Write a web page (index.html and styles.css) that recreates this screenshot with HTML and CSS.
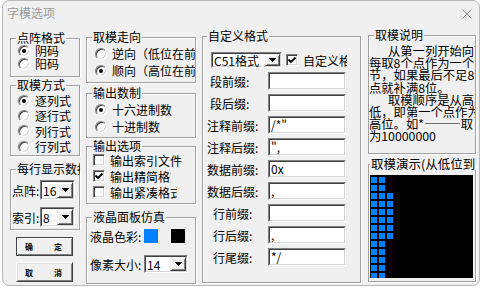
FILE: index.html
```html
<!DOCTYPE html>
<html lang="zh-CN">
<head>
<meta charset="utf-8">
<title>字模选项</title>
<link rel="stylesheet" href="styles.css">
</head>
<body>
<div class="window">
  <div class="titlebar">
    <span class="title">字模选项</span>
    <svg class="close" width="10" height="10" viewBox="0 0 10 10"><path d="M0.5 0.5L9.5 9.5M9.5 0.5L0.5 9.5" stroke="#8c8c8c" stroke-width="1" fill="none"/></svg>
  </div>
  <div class="client">
    <div class="col col-a">
      <div class="group g1">
        <div class="gt">点阵格式</div>
        <div class="opt"><span class="radio on"></span>阴码</div>
        <div class="opt"><span class="radio"></span>阳码</div>
      </div>
      <div class="group g2">
        <div class="gt">取模方式</div>
        <div class="opt"><span class="radio on"></span>逐列式</div>
        <div class="opt"><span class="radio"></span>逐行式</div>
        <div class="opt"><span class="radio"></span>列行式</div>
        <div class="opt"><span class="radio"></span>行列式</div>
      </div>
      <div class="group g3">
        <div class="gt">每行显示数据</div>
        <div class="crow">
          <span class="clabel">点阵:</span>
          <div class="combo cb-dot"><div class="combo-in"><span class="cv">16</span><span class="drop"><svg width="7" height="4" viewBox="0 0 7 4"><path d="M0 0h7v1H0zM1 1h5v1H1zM2 2h3v1H2zM3 3h1v1H3z" fill="#000"/></svg></span></div></div>
        </div>
        <div class="crow">
          <span class="clabel">索引:</span>
          <div class="combo cb-dot"><div class="combo-in"><span class="cv">8</span><span class="drop"><svg width="7" height="4" viewBox="0 0 7 4"><path d="M0 0h7v1H0zM1 1h5v1H1zM2 2h3v1H2zM3 3h1v1H3z" fill="#000"/></svg></span></div></div>
        </div>
      </div>
      <div class="btn btn-default"><span>确</span><span>定</span></div>
      <div class="btn btn-cancel"><span>取</span><span>消</span></div>
    </div>

    <div class="col col-b">
      <div class="group g4">
        <div class="gt">取模走向</div>
        <div class="opt"><span class="radio"></span>逆向（低位在前）</div>
        <div class="opt"><span class="radio on"></span>顺向（高位在前）</div>
      </div>
      <div class="group g5">
        <div class="gt">输出数制</div>
        <div class="opt"><span class="radio on"></span>十六进制数</div>
        <div class="opt"><span class="radio"></span>十进制数</div>
      </div>
      <div class="group g6">
        <div class="gt">输出选项</div>
        <div class="opt"><span class="check"></span>输出索引文件</div>
        <div class="opt w2"><span class="check"><svg width="10" height="10" viewBox="0 0 10 10"><path d="M1.5 4.5L4 7L8.5 2.5" stroke="#000" stroke-width="1.8" fill="none"/></svg></span>输出精简格式</div>
        <div class="opt w3"><span class="check"></span>输出紧凑格式</div>
      </div>
      <div class="group g7">
        <div class="gt">液晶面板仿真</div>
        <div class="lrow">
          <span class="llabel">液晶色彩:</span>
          <span class="swatch blue"></span>
          <span class="swatch black"></span>
        </div>
        <div class="lrow lrow2">
          <span class="llabel">像素大小:</span>
          <div class="combo cb-px"><div class="combo-in"><span class="cv">14</span><span class="drop"><svg width="7" height="4" viewBox="0 0 7 4"><path d="M0 0h7v1H0zM1 1h5v1H1zM2 2h3v1H2zM3 3h1v1H3z" fill="#000"/></svg></span></div></div>
        </div>
      </div>
    </div>

    <div class="col col-c">
      <div class="group g8">
        <div class="gt">自定义格式</div>
        <div class="fmt-row">
          <div class="combo cb-fmt"><div class="combo-in"><span class="cv">C51格式</span><span class="drop"><svg width="7" height="4" viewBox="0 0 7 4"><path d="M0 0h7v1H0zM1 1h5v1H1zM2 2h3v1H2zM3 3h1v1H3z" fill="#000"/></svg></span></div></div>
          <div class="chk-wrap"><span class="check"><svg width="10" height="10" viewBox="0 0 10 10"><path d="M1.5 4.5L4 7L8.5 2.5" stroke="#000" stroke-width="1.8" fill="none"/></svg></span><span class="chk-text">自定义格式</span></div>
        </div>
        <div class="frow"><span class="flabel p7">段前缀:</span><div class="field"><div class="field-in"></div></div></div>
        <div class="frow"><span class="flabel p7">段后缀:</span><div class="field"><div class="field-in"></div></div></div>
        <div class="frow"><span class="flabel p4">注释前缀:</span><div class="field"><div class="field-in">/*"</div></div></div>
        <div class="frow"><span class="flabel p4">注释后缀:</span><div class="field"><div class="field-in">",</div></div></div>
        <div class="frow"><span class="flabel p4">数据前缀:</span><div class="field"><div class="field-in">0x</div></div></div>
        <div class="frow"><span class="flabel p4">数据后缀:</span><div class="field"><div class="field-in">,</div></div></div>
        <div class="frow"><span class="flabel p10">行前缀:</span><div class="field"><div class="field-in"></div></div></div>
        <div class="frow"><span class="flabel p10">行后缀:</span><div class="field"><div class="field-in">,</div></div></div>
        <div class="frow"><span class="flabel p10">行尾缀:</span><div class="field"><div class="field-in">*/</div></div></div>
      </div>
    </div>

    <div class="col col-d">
      <div class="group g9">
        <div class="gt">取模说明</div>
        <div class="desc">
          <div class="ind">从第一列开始向下</div>
          <div>每取8个点作为一个字</div>
          <div>节，如果最后不足8个</div>
          <div>点就补满8位。</div>
          <div class="ind">取模顺序是从高到</div>
          <div>低，即第一个点作为最</div>
          <div>高位。如*———取</div>
          <div>为10000000</div>
        </div>
      </div>
      <div class="group g10">
        <div class="gt">取模演示(从低位到高位)</div>
        <svg class="lcd" width="103" height="103" viewBox="0 0 103 103">
          <defs>
            <pattern id="px" x="1" y="2" width="8" height="8" patternUnits="userSpaceOnUse">
              <rect x="0" y="0" width="6" height="6" fill="#0080ff"/>
            </pattern>
          </defs>
          <rect x="0" y="0" width="103" height="103" fill="#000"/>
          <rect x="1" y="2" width="16" height="104" fill="url(#px)"/>
          <rect x="17" y="18" width="8" height="48" fill="url(#px)"/>
        </svg>
      </div>
    </div>
  </div>
</div>
</body>
</html>
```
FILE: styles.css
```css
* { box-sizing: border-box; }
html, body { margin: 0; padding: 0; }
body {
  width: 484px;
  height: 289px;
  overflow: hidden;
  background: #ffffff;
  font-family: "Noto Sans CJK SC", "Liberation Sans", sans-serif;
  font-size: 12px;
  color: #000;
}
.window {
  width: 478px;
  height: 286px;
  margin-left: 2px;
  background: #f0f0f0;
  border: 1px solid #b9b9b9;
  border-radius: 7px;
  overflow: hidden;
}
.titlebar {
  height: 27px;
  display: flex;
  justify-content: space-between;
  align-items: flex-start;
}
.title {
  margin: 6px 0 0 4px;
  line-height: 12px;
  color: #9b9b9b;
}
.close { margin: 8px 7px 0 0; }

.client {
  display: grid;
  grid-template-columns: 70px 110px 159px 109px;
  column-gap: 6px;
  padding: 7px 0 0 7px;
}
.col { display: flex; flex-direction: column; }
.col-a { padding-top: 3px; }
.col-b { padding-top: 2px; }
.col-c { padding-top: 1px; }
.col-d { margin-left: 1px; }

.group {
  position: relative;
  flex: none;
  border: 1px solid #a0a0a0;
  box-shadow: inset 1px 1px 0 #fff, 1px 1px 0 #fff;
}
.gt {
  position: absolute;
  top: -7px;
  left: 5px;
  padding: 0 1px;
  line-height: 12px;
  background: #f0f0f0;
  white-space: nowrap;
  overflow-x: clip;
  overflow-y: visible;
}

.opt {
  display: flex;
  align-items: center;
  white-space: nowrap;
  overflow-x: clip;
  overflow-y: visible;
}
.radio {
  flex: none;
  width: 12px;
  height: 12px;
  margin-right: 5px;
  border-radius: 50%;
  background: #fff;
  border: 1px solid;
  border-color: #808080 #fff #fff #808080;
  box-shadow: inset 1px 1px 0 #404040, inset -1px -1px 0 #d4d4d4;
  position: relative;
}
.radio.on::after {
  content: "";
  position: absolute;
  left: 3px;
  top: 3px;
  width: 4px;
  height: 4px;
  border-radius: 50%;
  background: #000;
}
.check {
  flex: none;
  width: 12px;
  height: 12px;
  margin-right: 5px;
  background: #fff;
  border: 1px solid;
  border-color: #808080 #fff #fff #808080;
  box-shadow: inset 1px 1px 0 #404040, inset -1px -1px 0 #d4d4d4;
  display: flex;
}
.check svg { display: block; }

/* column A */
.g1 { height: 39px; padding: 5px 0 0 7px; }
.g1 .opt { height: 13px; }
.g2 { height: 71px; margin-top: 8px; padding: 7px 0 0 7px; }
.g2 .opt { height: 15.3px; }
.g3 { height: 61px; margin-top: 13px; padding: 10px 0 0 1px; }
.g3 .gt { max-width: 64px; }
.crow { display: flex; align-items: center; }
.crow + .crow { margin-top: 7px; }
.clabel { width: 28px; white-space: nowrap; }

.combo {
  flex: none;
  border: 1px solid;
  border-color: #808080 #fff #fff #808080;
  background: #fff;
}
.combo-in {
  height: 100%;
  display: flex;
  align-items: stretch;
  border: 1px solid;
  border-color: #404040 #d4d4d4 #d4d4d4 #404040;
}
.cv {
  flex: 1;
  padding-left: 1px;
  display: flex;
  align-items: center;
  white-space: nowrap;
  overflow-x: clip;
  overflow-y: visible;
}
.drop {
  flex: none;
  width: 16px;
  background: #f0f0f0;
  border: 1px solid;
  border-color: #f0f0f0 #404040 #404040 #f0f0f0;
  box-shadow: inset 1px 1px 0 #fff, inset -1px -1px 0 #808080;
  display: flex;
  align-items: center;
  justify-content: center;
}
.drop svg { display: block; }
.cb-dot { width: 35px; height: 20px; }
.cb-px { width: 44px; height: 18px; }
.cb-fmt { width: 71px; height: 16px; }
.cb-fmt .drop { width: 15px; }

.btn {
  flex: none;
  width: 57px;
  margin-left: 6px;
  display: flex;
  justify-content: space-between;
  align-items: center;
  padding: 0 10px 0 8px;
  font-size: 8px;
  font-weight: 700;
  background: #f0f0f0;
}
.btn-default {
  height: 19px;
  margin-top: 7px;
  border: 1px solid #404040;
  box-shadow: inset 1px 1px 0 #fff, inset -1px -1px 0 #808080;
}
.btn-cancel {
  height: 20px;
  margin-top: 6px;
  border: 1px solid;
  border-color: #fff #404040 #404040 #fff;
  box-shadow: inset 1px 1px 0 #e3e3e3, inset -1px -1px 0 #808080;
}

/* column B */
.g4 { height: 46px; padding: 7px 0 0 8px; }
.g4 .opt { height: 17px; }
.g5 { height: 45px; margin-top: 10px; padding: 7px 0 0 8px; }
.g5 .opt { height: 17px; }
.g6 { height: 58px; margin-top: 8px; padding: 5px 0 0 6px; }
.g6 .opt { height: 16px; }
.g6 .w2 { width: 78px; }
.g6 .w3 { width: 84px; }
.g7 { height: 67px; margin-top: 13px; padding: 11px 0 0 3px; }
.lrow { display: flex; align-items: center; height: 14px; }
.lrow2 { height: 18px; margin-top: 12px; }
.llabel { width: 54px; white-space: nowrap; }
.swatch { flex: none; width: 14px; height: 14px; }
.blue { background: #0080ff; margin-right: 13px; }
.black { background: #000; }

/* column C */
.g8 { height: 247px; padding: 15px 0 0 0; }
.g8 .gt { left: 4px; }
.fmt-row { display: flex; align-items: center; height: 16px; margin-left: 8px; }
.chk-wrap {
  display: flex;
  align-items: center;
  width: 61px;
  margin-left: 4px;
  overflow-x: clip;
  overflow-y: visible;
  white-space: nowrap;
}
.chk-wrap .check { margin-right: 5px; }
.frow { display: flex; align-items: center; height: 18px; margin-top: 4px; }
.flabel { width: 65px; white-space: nowrap; }
.p4 { padding-left: 4px; }
.p7 { padding-left: 7px; }
.p10 { padding-left: 10px; }
.field {
  width: 78px;
  height: 18px;
  border: 1px solid;
  border-color: #808080 #fff #fff #808080;
  background: #fff;
}
.field-in {
  height: 100%;
  border: 1px solid;
  border-color: #404040 #d4d4d4 #d4d4d4 #404040;
  padding-left: 1px;
  line-height: 14px;
  white-space: nowrap;
  overflow-x: clip;
  overflow-y: visible;
}

/* column D */
.g9 { height: 119px; padding: 9px 0 0 0; }
.desc {
  font-size: 12.3px;
  line-height: 12.2px;
  white-space: nowrap;
  overflow-x: clip;
  overflow-y: visible;
}
.ind { padding-left: 19px; }
.g10 { height: 118px; margin-top: 10px; padding: 10px 0 0 1px; }
.g10 .gt { left: 1px; max-width: 106px; font-size: 12.5px; }
.lcd { display: block; }
```
